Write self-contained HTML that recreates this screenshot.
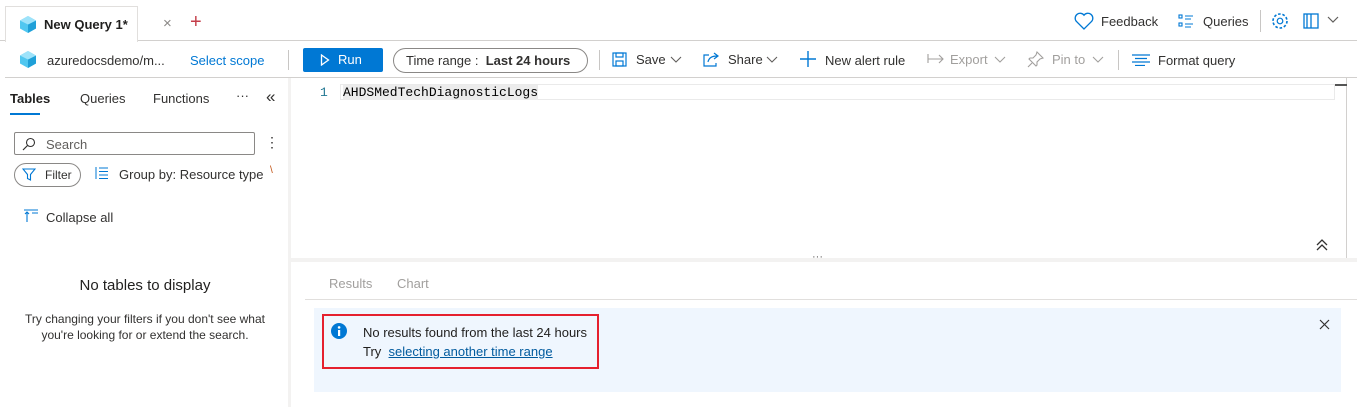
<!DOCTYPE html>
<html><head><meta charset="utf-8"><style>
*{margin:0;padding:0;box-sizing:border-box}
body{width:1357px;height:407px;background:#fff;font-family:"Liberation Sans",sans-serif;font-size:13px;color:#323130;position:relative;overflow:hidden}
.a{position:absolute;white-space:nowrap}
.sep{position:absolute;width:1px;background:#c8c6c4}
</style></head><body>
<!-- tab bar -->
<div class="a" style="left:5px;top:6px;width:133px;height:36px;border:1px solid #e1dfdd;border-bottom:none;background:#fff"></div>
<div class="a" style="left:0;top:40px;width:5px;height:1px;background:#d2d0ce"></div>
<div class="a" style="left:138px;top:40px;width:1219px;height:1px;background:#d2d0ce"></div>
<svg class="a" style="left:20px;top:16px" width="16" height="17" viewBox="0 0 16 17"><path d="M8 0L16 4.5V12.5L8 17L0 12.5V4.5Z" fill="#50c7f0"/><path d="M8 8.5L16 4.5V12.5L8 17Z" fill="#1fa0d8"/><path d="M8 0L16 4.5L8 8.5L0 4.5Z" fill="#9ee3fa"/></svg>
<div class="a" style="left:44px;top:17px;font-weight:bold;font-size:13px;color:#201f1e">New Query 1*</div>
<div class="a" style="left:163px;top:15px;color:#8a8886;font-size:15px">×</div>
<div class="a" style="left:190px;top:11px;color:#c43e4a;font-size:20px;font-weight:300">+</div>
<svg class="a" style="left:1074px;top:12px" width="20" height="18" viewBox="0 0 20 18"><path d="M10 17L2.2 9.2A4.6 4.6 0 0 1 10 3.2A4.6 4.6 0 0 1 17.8 9.2Z" fill="none" stroke="#0078d4" stroke-width="1.3"/></svg>
<div class="a" style="left:1101px;top:14px">Feedback</div>
<svg class="a" style="left:1178px;top:14px" width="16" height="14"><g fill="none" stroke="#0078d4" stroke-width="1.1"><rect x="1" y="1" width="3" height="3"/><rect x="1" y="9" width="3" height="3"/><path d="M7 2h8M7 5h6M7 10h8M7 13h6"/></g></svg>
<div class="a" style="left:1203px;top:14px">Queries</div>
<div class="sep" style="left:1260px;top:10px;height:22px"></div>
<svg class="a" style="left:1270px;top:11px" width="20" height="20" viewBox="0 0 20 20"><circle cx="10" cy="10" r="2.8" fill="none" stroke="#0078d4" stroke-width="1.2"/><circle cx="10" cy="10" r="7" fill="none" stroke="#0078d4" stroke-width="1.6" stroke-dasharray="2.6 1.8"/></svg>
<svg class="a" style="left:1302px;top:12px" width="18" height="18"><g fill="none" stroke="#0078d4" stroke-width="1.3"><rect x="2" y="2" width="14" height="14"/><path d="M9 2v14M5 2v14"/></g></svg>
<svg class="a" style="left:1327px;top:16px" width="12" height="8"><path d="M1 1l5 5 5-5" fill="none" stroke="#605e5c" stroke-width="1.2"/></svg>
<!-- toolbar -->
<svg class="a" style="left:20px;top:51px" width="16" height="17" viewBox="0 0 16 17"><path d="M8 0L16 4.5V12.5L8 17L0 12.5V4.5Z" fill="#50c7f0"/><path d="M8 8.5L16 4.5V12.5L8 17Z" fill="#1fa0d8"/><path d="M8 0L16 4.5L8 8.5L0 4.5Z" fill="#9ee3fa"/></svg>
<div class="a" style="left:47px;top:53px">azuredocsdemo/m...</div>
<div class="a" style="left:190px;top:53px;color:#0078d4">Select scope</div>
<div class="sep" style="left:288px;top:50px;height:20px"></div>
<div class="a" style="left:303px;top:48px;width:80px;height:24px;background:#0078d4;border-radius:2px"></div>
<svg class="a" style="left:320px;top:54px" width="10" height="12"><path d="M1.5 1L8.5 6L1.5 11Z" fill="none" stroke="#fff" stroke-width="1.3"/></svg>
<div class="a" style="left:338px;top:52px;color:#fff">Run</div>
<div class="a" style="left:393px;top:48px;width:195px;height:25px;border:1px solid #8a8886;border-radius:13px"></div>
<div class="a" style="left:406px;top:53px">Time range :&nbsp; <b>Last 24 hours</b></div>
<div class="sep" style="left:599px;top:50px;height:20px"></div>
<svg class="a" style="left:612px;top:52px" width="15" height="15"><g fill="none" stroke="#0078d4" stroke-width="1.2"><rect x="1" y="1" width="13" height="13"/><rect x="4" y="1" width="7" height="4"/><rect x="4" y="9" width="7" height="5"/></g></svg>
<div class="a" style="left:636px;top:52px">Save</div>
<svg class="a" style="left:670px;top:56px" width="12" height="8"><path d="M1 1l5 5 5-5" fill="none" stroke="#605e5c" stroke-width="1.1"/></svg>
<svg class="a" style="left:703px;top:51px" width="17" height="16"><g fill="none" stroke="#0078d4" stroke-width="1.2"><path d="M6 4H1v11h12v-3"/><path d="M5 11c1-5 5-6 9-6M11 2l4 3-4 3"/></g></svg>
<div class="a" style="left:728px;top:52px">Share</div>
<svg class="a" style="left:766px;top:56px" width="12" height="8"><path d="M1 1l5 5 5-5" fill="none" stroke="#605e5c" stroke-width="1.1"/></svg>
<svg class="a" style="left:800px;top:51px" width="16" height="16"><path d="M8 0v16M0 8h16" stroke="#0078d4" stroke-width="1.4"/></svg>
<div class="a" style="left:825px;top:53px">New alert rule</div>
<svg class="a" style="left:927px;top:54px" width="18" height="10"><path d="M1 0v9M1 5h15M12 1l4 4-4 4" fill="none" stroke="#a19f9d" stroke-width="1.1"/></svg>
<div class="a" style="left:950px;top:52px;color:#a19f9d">Export</div>
<svg class="a" style="left:994px;top:56px" width="12" height="8"><path d="M1 1l5 5 5-5" fill="none" stroke="#a19f9d" stroke-width="1.1"/></svg>
<svg class="a" style="left:1027px;top:51px" width="17" height="17"><path d="M10 1l6 6-3 1-3 3 0 3-1 1-7-7 1-1 3 0 3-3zM5 12l-4 4" fill="none" stroke="#a19f9d" stroke-width="1.1"/></svg>
<div class="a" style="left:1052px;top:52px;color:#a19f9d">Pin to</div>
<svg class="a" style="left:1092px;top:56px" width="12" height="8"><path d="M1 1l5 5 5-5" fill="none" stroke="#a19f9d" stroke-width="1.1"/></svg>
<div class="sep" style="left:1118px;top:50px;height:20px"></div>
<svg class="a" style="left:1132px;top:54px" width="18" height="12"><path d="M0 1h18M3 4.5h12M0 8h18M3 11.5h10" stroke="#0078d4" stroke-width="1.2"/></svg>
<div class="a" style="left:1158px;top:53px">Format query</div>
<div class="a" style="left:5px;top:77px;width:1352px;height:1px;background:#d2d0ce"></div>
<!-- left panel -->
<div class="a" style="left:288px;top:78px;width:3px;height:329px;background:#f3f2f1"></div>
<div class="a" style="left:10px;top:91px;font-weight:bold;color:#201f1e">Tables</div>
<div class="a" style="left:10px;top:113px;width:30px;height:2px;background:#0078d4"></div>
<div class="a" style="left:80px;top:91px">Queries</div>
<div class="a" style="left:153px;top:91px">Functions</div>
<div class="a" style="left:236px;top:88px">···</div>
<div class="a" style="left:266px;top:87px;font-size:17px">«</div>
<div class="a" style="left:14px;top:132px;width:241px;height:23px;border:1px solid #8a8886;border-radius:2px"></div>
<svg class="a" style="left:22px;top:137px" width="14" height="14"><circle cx="8.5" cy="5.5" r="4" fill="none" stroke="#323130" stroke-width="1.1"/><path d="M5.5 8.5L1 13" stroke="#323130" stroke-width="1.2"/></svg>
<div class="a" style="left:46px;top:137px;color:#605e5c">Search</div>
<div class="a" style="left:265px;top:134px;font-size:14px">⋮</div>
<div class="a" style="left:14px;top:163px;width:67px;height:24px;border:1px solid #8a8886;border-radius:12px"></div>
<svg class="a" style="left:22px;top:168px" width="14" height="13"><path d="M1 1h12L8.5 6.5V12L5.5 10.5V6.5Z" fill="none" stroke="#0078d4" stroke-width="1.1"/></svg>
<div class="a" style="left:45px;top:168px;font-size:12px">Filter</div>
<svg class="a" style="left:95px;top:167px" width="13" height="12"><path d="M1 0v12M4 1h9M4 4.5h9M4 8h9M4 11.5h9" stroke="#0078d4" stroke-width="1"/></svg>
<div class="a" style="left:119px;top:167px">Group by: Resource type</div>
<div class="a" style="left:270px;top:165px;color:#c05010;font-size:10px">\</div>
<svg class="a" style="left:24px;top:209px" width="14" height="14"><path d="M0 1h14M8 4h6M3 3v10M1 5l2-2 2 2" fill="none" stroke="#0078d4" stroke-width="1.1"/></svg>
<div class="a" style="left:46px;top:210px">Collapse all</div>
<div class="a" style="left:0;top:277px;width:290px;text-align:center;font-size:15px;color:#201f1e">No tables to display</div>
<div class="a" style="left:0;top:311px;width:290px;text-align:center;font-size:12px;line-height:16px;color:#323130">Try changing your filters if you don't see what<br>you're looking for or extend the search.</div>
<!-- editor -->
<div class="a" style="left:340px;top:84px;width:995px;height:16px;border:1px solid #eaeaea;background:#fff"></div>
<div class="a" style="left:320px;top:85px;font-family:'Liberation Mono',monospace;font-size:13px;color:#237893">1</div>
<div class="a" style="left:343px;top:85px;font-family:'Liberation Mono',monospace;font-size:13px;color:#000;background:#ececec">AHDSMedTechDiagnosticLogs</div>
<div class="a" style="left:1346px;top:78px;width:1px;height:180px;background:#d2d0ce"></div>
<div class="a" style="left:1335px;top:84px;width:12px;height:2px;background:#555"></div>
<svg class="a" style="left:1316px;top:239px" width="12" height="12"><path d="M1 6l5-5 5 5M1 11l5-5 5 5" fill="none" stroke="#323130" stroke-width="1.3"/></svg>
<div class="a" style="left:291px;top:258px;width:1066px;height:4px;background:#f3f2f1"></div>
<div class="a" style="left:812px;top:251px;font-size:11px;color:#605e5c">···</div>
<!-- results -->
<div class="a" style="left:329px;top:276px;color:#a19f9d">Results</div>
<div class="a" style="left:397px;top:276px;color:#a19f9d">Chart</div>
<div class="a" style="left:305px;top:299px;width:1052px;height:1px;background:#e1dfdd"></div>
<div class="a" style="left:314px;top:308px;width:1027px;height:84px;background:#eff6fe"></div>
<div class="a" style="left:322px;top:314px;width:277px;height:55px;border:2px solid #e5202e"></div>
<svg class="a" style="left:331px;top:323px" width="16" height="16"><circle cx="8" cy="8" r="8" fill="#0078d4"/><rect x="7" y="7" width="2.2" height="6" fill="#fff"/><circle cx="8.1" cy="4.4" r="1.3" fill="#fff"/></svg>
<div class="a" style="left:363px;top:325px;color:#201f1e">No results found from the last 24 hours</div>
<div class="a" style="left:363px;top:344px;color:#201f1e">Try&nbsp; <span style="color:#005a9e;text-decoration:underline">selecting another time range</span></div>
<svg class="a" style="left:1319px;top:319px" width="11" height="11"><path d="M1 1l9 9M10 1l-9 9" stroke="#323130" stroke-width="1.2"/></svg>
</body></html>
